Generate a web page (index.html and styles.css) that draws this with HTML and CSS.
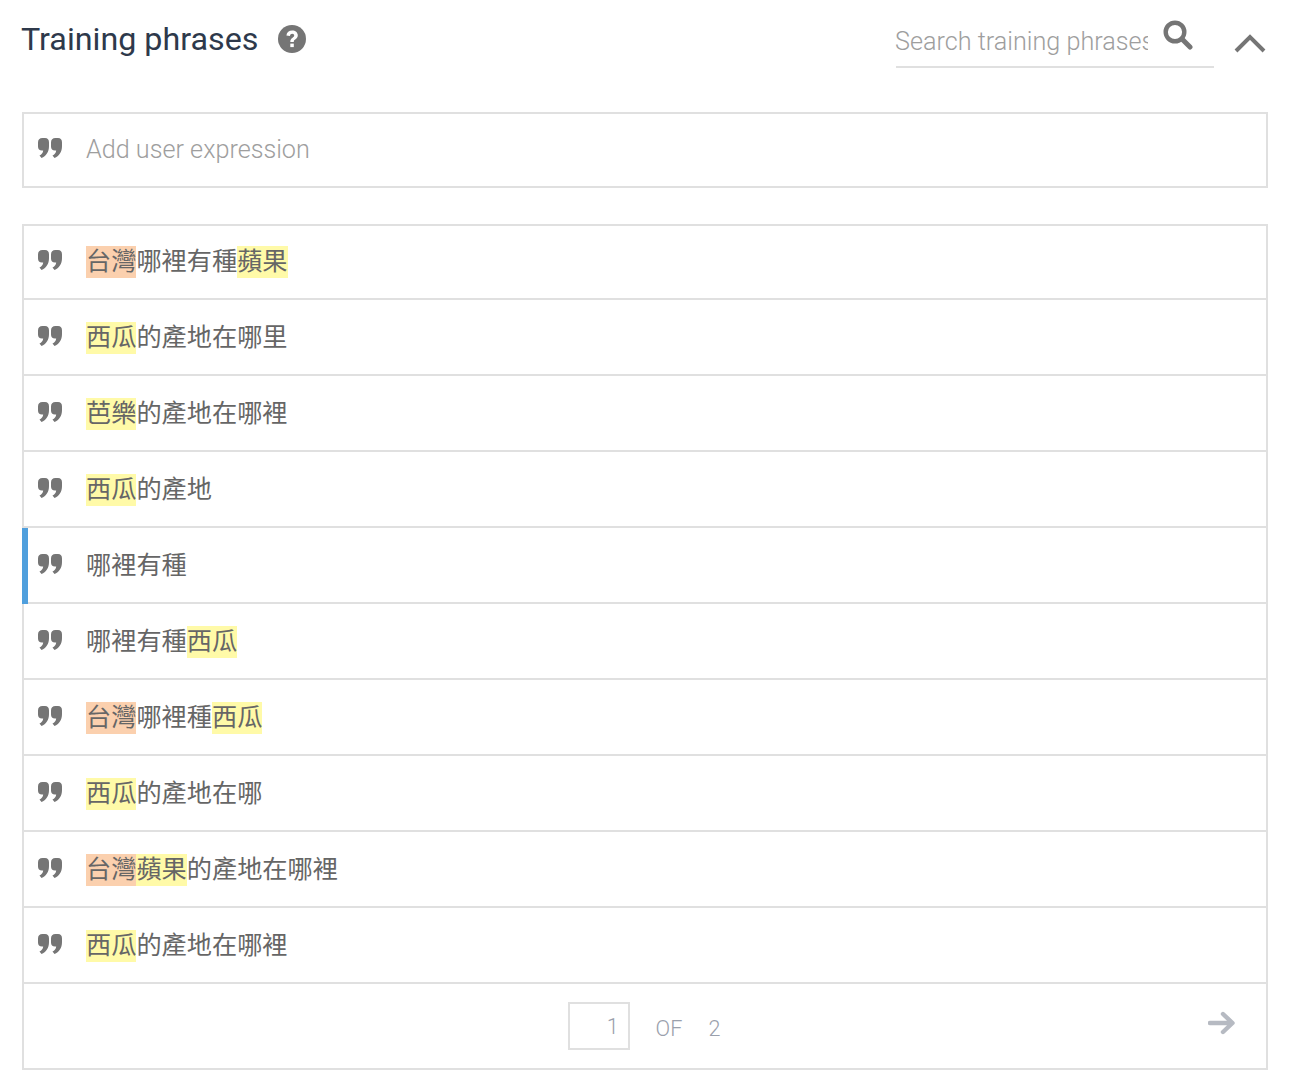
FILE: index.html
```html
<!DOCTYPE html>
<html lang="zh-Hant">
<head>
<meta charset="utf-8">
<title>Training phrases</title>
<link rel="stylesheet" href="styles.css">
</head>
<body>
<svg class="defs" width="0" height="0" aria-hidden="true">
  <symbol id="quote" viewBox="0 0 24 20">
    <path d="M4.500 0H7Q11 0 11 4.500V8C11 14 8 18 3.500 20L1.500 17.500C3.500 16.500 5 15 5.200 12.500H4Q0 12.500 0 8.500V4.500Q0 0 4.500 0Z"/>
    <path d="M17.500 0H20Q24 0 24 4.500V8C24 14 21 18 16.500 20L14.500 17.500C16.500 16.500 18 15 18.200 12.500H17Q13 12.500 13 8.500V4.500Q13 0 17.500 0Z"/>
  </symbol>
</svg>
<main class="panel">
  <header class="head">
    <h2 class="title">Training phrases</h2>
    <svg class="help" viewBox="0 0 28 28" aria-hidden="true">
      <circle cx="14" cy="14" r="14" fill="#757575"/>
      <path d="M8.400 10.400C8.800 7.200 11 5.400 14.200 5.400C17.400 5.400 19.800 7.400 19.800 10.300C19.800 12.400 18.600 13.500 17.200 14.400C16 15.200 15.800 15.700 15.800 17H12.300C12.300 14.800 13 13.700 14.600 12.700C15.600 12 16.200 11.500 16.200 10.600C16.200 9.500 15.400 8.800 14.200 8.800C13 8.800 12.200 9.600 11.900 11Z" fill="#fff"/>
      <rect x="12.300" y="18.600" width="3.500" height="3.500" fill="#fff"/>
    </svg>
    <div class="tools">
      <div class="search">
        <div class="search-text">Search training phrases</div>
        <svg class="search-icon" viewBox="0 0 30 30" aria-hidden="true">
          <circle cx="12" cy="12" r="9.300" fill="none" stroke="#757575" stroke-width="4.400"/>
          <path d="M19 19L27 27" stroke="#757575" stroke-width="5" stroke-linecap="round"/>
        </svg>
      </div>
      <svg class="chevron" viewBox="0 0 32 20" aria-hidden="true">
        <path d="M2 18L16 4L30 18" fill="none" stroke="#757575" stroke-width="4"/>
      </svg>
    </div>
  </header>

  <section class="box add">
    <div class="row">
      <svg class="quote"><use href="#quote"/></svg>
      <div class="placeholder">Add user expression</div>
    </div>
  </section>

  <section class="box list">
    <div class="row"><svg class="quote"><use href="#quote"/></svg><div class="phrase"><span class="ent-o">台灣</span>哪裡有種<span class="ent-y">蘋果</span></div></div>
    <div class="row"><svg class="quote"><use href="#quote"/></svg><div class="phrase"><span class="ent-y">西瓜</span>的產地在哪里</div></div>
    <div class="row"><svg class="quote"><use href="#quote"/></svg><div class="phrase"><span class="ent-y">芭樂</span>的產地在哪裡</div></div>
    <div class="row"><svg class="quote"><use href="#quote"/></svg><div class="phrase"><span class="ent-y">西瓜</span>的產地</div></div>
    <div class="row active"><svg class="quote"><use href="#quote"/></svg><div class="phrase">哪裡有種</div></div>
    <div class="row"><svg class="quote"><use href="#quote"/></svg><div class="phrase">哪裡有種<span class="ent-y">西瓜</span></div></div>
    <div class="row"><svg class="quote"><use href="#quote"/></svg><div class="phrase"><span class="ent-o">台灣</span>哪裡種<span class="ent-y">西瓜</span></div></div>
    <div class="row"><svg class="quote"><use href="#quote"/></svg><div class="phrase"><span class="ent-y">西瓜</span>的產地在哪</div></div>
    <div class="row"><svg class="quote"><use href="#quote"/></svg><div class="phrase"><span class="ent-o">台灣</span><span class="ent-y">蘋果</span>的產地在哪裡</div></div>
    <div class="row"><svg class="quote"><use href="#quote"/></svg><div class="phrase"><span class="ent-y">西瓜</span>的產地在哪裡</div></div>
    <footer class="pager">
      <div class="page-box">1</div>
      <span class="of">OF</span>
      <span class="total">2</span>
      <svg class="next" viewBox="0 0 28 24" aria-hidden="true">
        <path d="M2 12H24M15 3L24.500 12L15 21" fill="none" stroke="#b6bac2" stroke-width="4.400" stroke-linecap="round" stroke-linejoin="round"/>
      </svg>
    </footer>
  </section>
</main>
</body>
</html>
```

FILE: styles.css
```css
* { box-sizing: border-box; }
html, body { margin: 0; padding: 0; background: #fff; }
body { font-family: Roboto, "Noto Sans CJK TC", sans-serif; }
.defs { position: absolute; }

.panel { width: 1246px; margin-left: 22px; }

.head { display: flex; align-items: flex-start; height: 112px; }
.title {
  margin: 17px 0 0 -1px;
  font-size: 32.25px;
  line-height: 44px;
  font-weight: 400;
  color: #2e394b;
}
.help { width: 28px; height: 28px; margin: 25px 0 0 20px; }

.tools { margin-left: auto; display: flex; align-items: flex-start; }
.search {
  width: 318px;
  height: 68px;
  padding-top: 24px;
  border-bottom: 2px solid #e0e0e0;
  display: flex;
  align-items: flex-start;
}
.search-text {
  width: 253px;
  margin-left: -1px;
  overflow: hidden;
  white-space: nowrap;
  font-size: 25.2px;
  line-height: 36px;
  font-weight: 300;
  color: #9e9e9e;
}
.search-icon { width: 30px; height: 30px; margin: -4px 0 0 15px; }
.chevron { width: 32px; height: 20px; margin: 33px 2px 0 20px; }

.box { border: 2px solid #e0e0e0; }
.add { height: 76px; margin-bottom: 36px; }
.add .row { height: 72px; border: 0; }

.row {
  position: relative;
  display: flex;
  align-items: center;
  height: 74px;
  padding-left: 14px;
  border-bottom: 2px solid #e0e0e0;
}
.list .row + .row { height: 76px; padding-top: 2px; }
.active::before {
  content: "";
  position: absolute;
  left: -2px;
  top: 0;
  bottom: -2px;
  width: 6px;
  background: #4f9fdd;
}

.quote { width: 24px; height: 20px; fill: #757575; flex: none; margin-top: -4px; }
.placeholder, .phrase {
  margin-left: 24px;
  font-size: 25.2px;
  line-height: 32px;
  white-space: nowrap;
}
.placeholder { font-weight: 300; color: #9e9e9e; }
.phrase { color: #666; font-weight: 400; }
.ent-o, .ent-y { display: inline-block; height: 32px; vertical-align: top; }
.ent-o { background: #fbd0ae; }
.ent-y { background: #fffaa8; }

.pager {
  position: relative;
  display: flex;
  align-items: center;
  justify-content: center;
  height: 84px;
  padding-right: 2px;
  color: #9aa0ac;
  font-size: 21.6px;
  font-weight: 300;
}
.page-box {
  width: 62px;
  height: 48px;
  border: 2px solid #e0e0e0;
  padding-right: 9px;
  text-align: right;
  line-height: 46px;
  margin-right: 26px;
}
.of { margin-right: 26px; margin-top: 5px; }
.total { margin-top: 5px; }
.next { position: absolute; right: 30px; top: 27px; width: 28px; height: 24px; }
```
